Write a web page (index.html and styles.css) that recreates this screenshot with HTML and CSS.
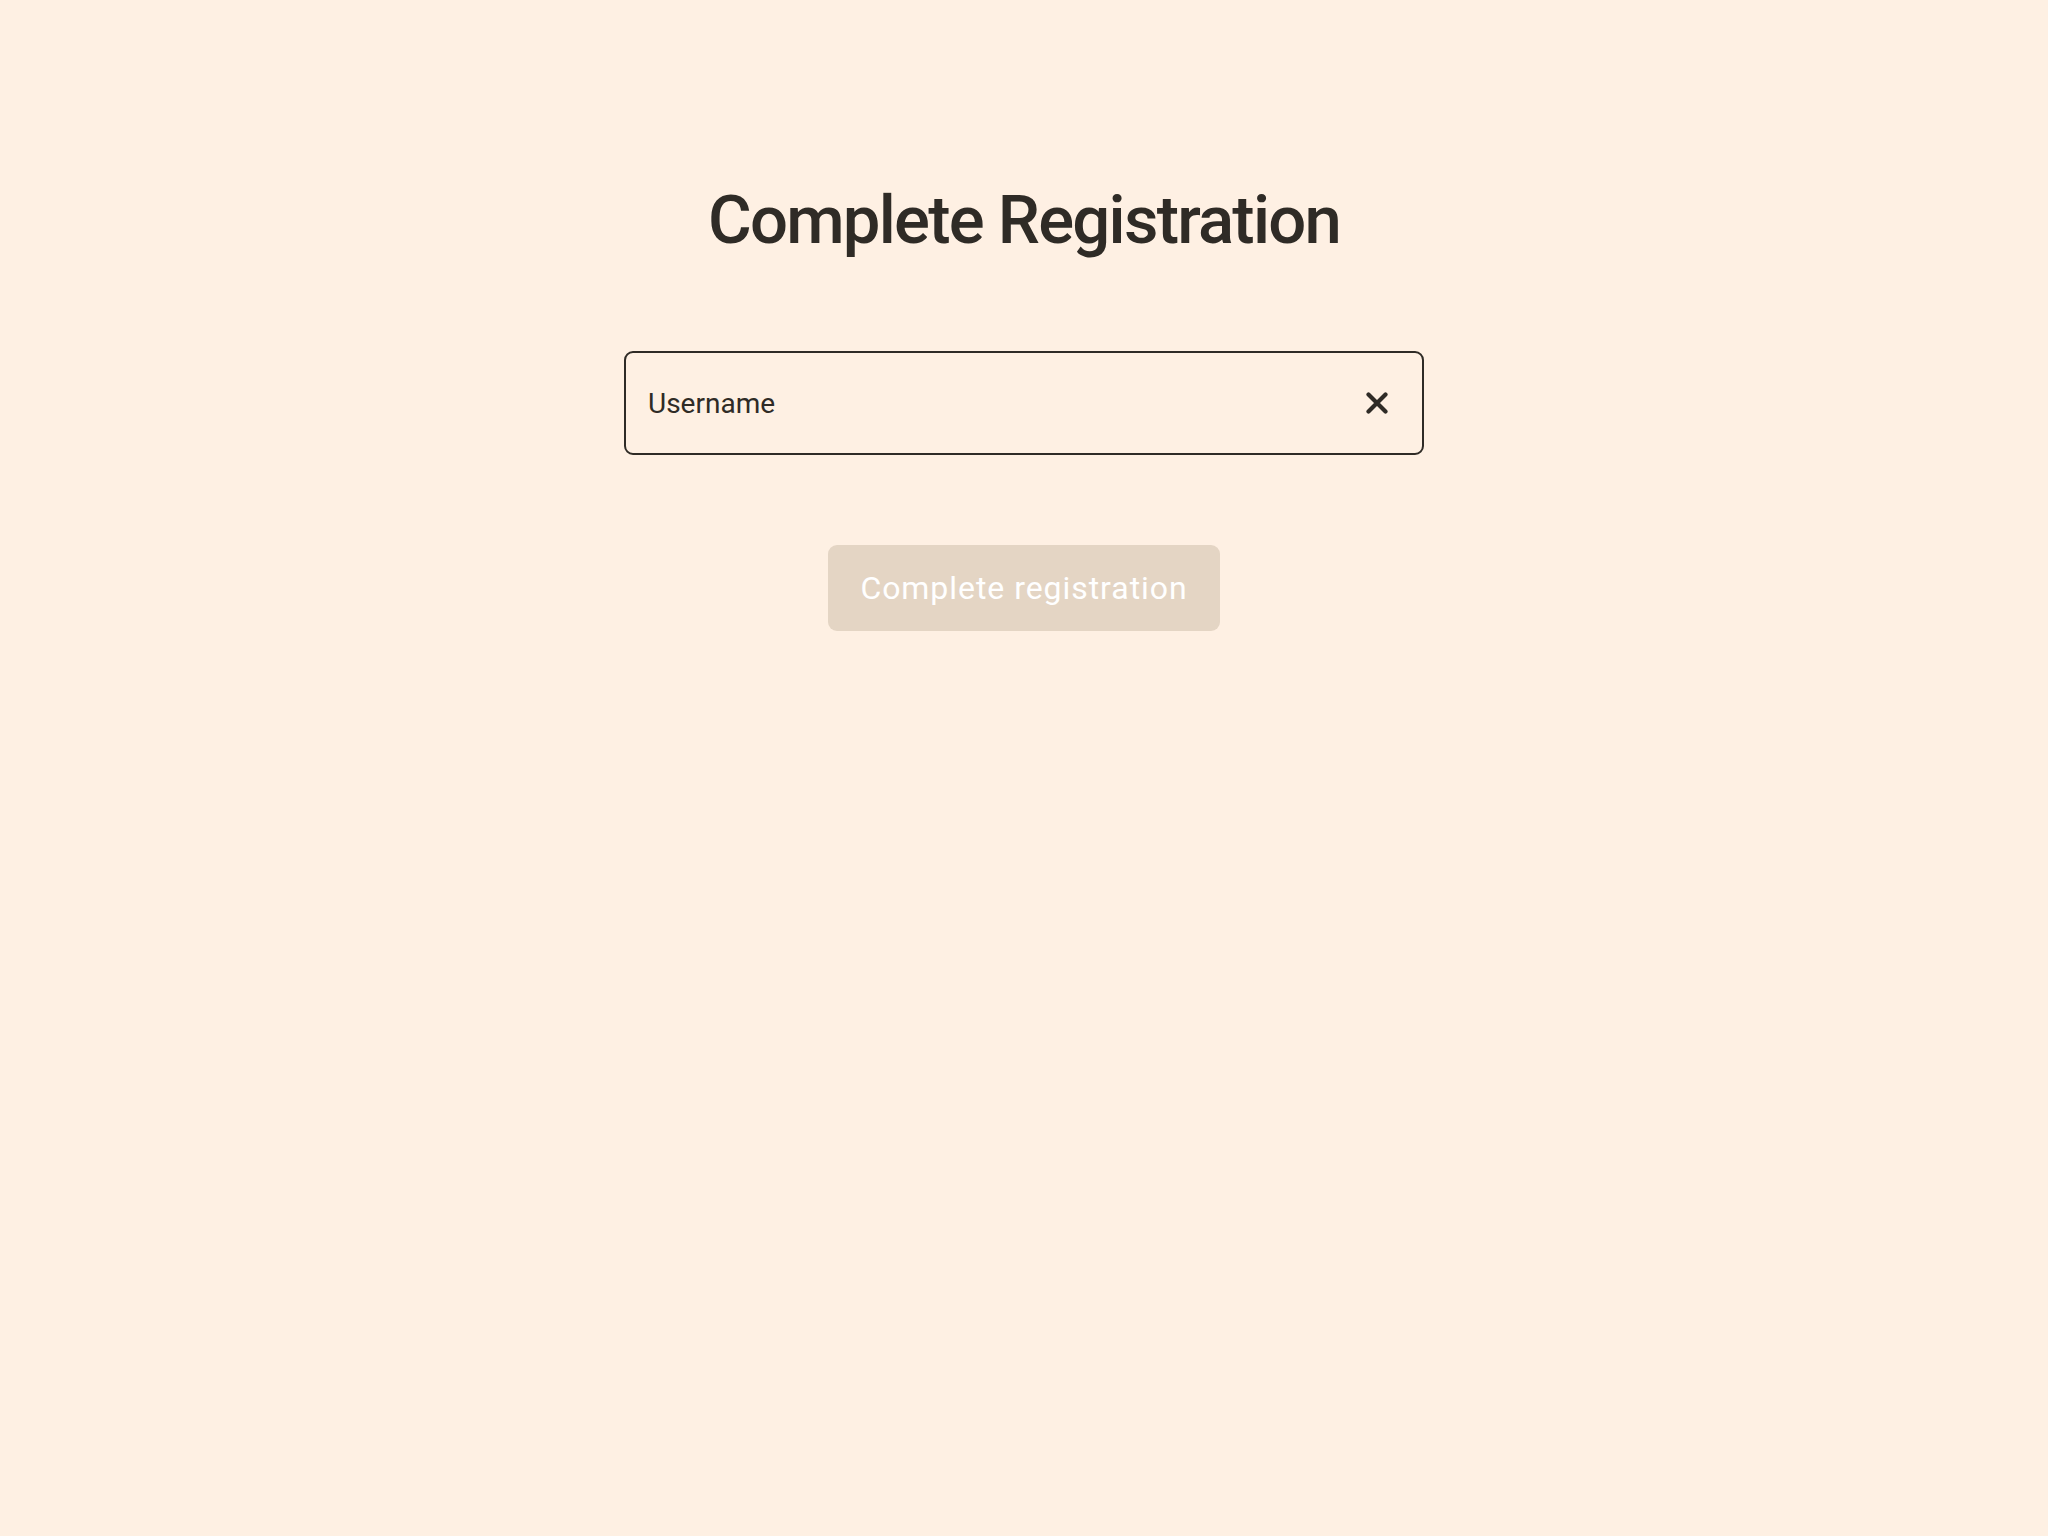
FILE: index.html
```html
<!DOCTYPE html>
<html lang="en">
<head>
<meta charset="utf-8">
<title>Complete Registration</title>
<link rel="stylesheet" href="styles.css">
</head>
<body>
<main class="page">
  <h1 class="title">Complete Registration</h1>
  <div class="field">
    <span class="field-label">Username</span>
    <button class="clear" type="button" aria-label="Clear">
      <svg width="22" height="22" viewBox="0 0 22 22"><path d="M2.5 2.5 L19.5 19.5 M19.5 2.5 L2.5 19.5" stroke="#2f2b26" stroke-width="4.2" stroke-linecap="round" fill="none"/></svg>
    </button>
  </div>
  <button class="submit" type="button">Complete registration</button>
</main>
</body>
</html>
```
FILE: styles.css
```css
html, body {
  margin: 0;
  padding: 0;
  background: #fef0e3;
  height: 100%;
}
body {
  font-family: Roboto, "Liberation Sans", sans-serif;
  color: #2f2b26;
}
.page {
  display: flex;
  flex-direction: column;
  align-items: center;
  padding-top: 187px;
}
.title {
  margin: 0;
  font-size: 67px;
  font-weight: 500;
  line-height: 1;
  letter-spacing: -1.75px;
}
.field {
  box-sizing: border-box;
  margin-top: 97px;
  width: 800px;
  height: 104px;
  border: 2px solid #2f2b26;
  border-radius: 9px;
  display: flex;
  align-items: center;
  justify-content: space-between;
  padding: 0 34px 0 22px;
}
.field-label {
  font-size: 28px;
}
.clear {
  border: 0;
  background: none;
  padding: 0;
  width: 22px;
  height: 22px;
  display: flex;
}
.submit {
  margin-top: 90px;
  width: 392px;
  height: 86px;
  border: 0;
  border-radius: 9px;
  background: #e4d5c4;
  color: #ffffff;
  font-family: Roboto, "Liberation Sans", sans-serif;
  font-size: 32px;
  font-weight: 400;
  letter-spacing: 0.95px;
  padding: 0;
}
```
